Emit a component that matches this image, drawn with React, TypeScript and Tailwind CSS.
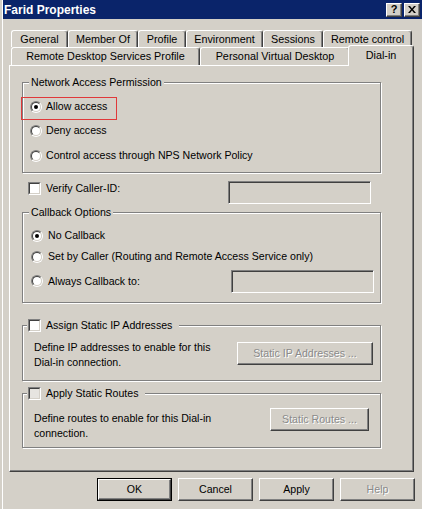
import type { ReactNode } from 'react'

const raised =
  'border border-t-white border-l-white border-r-[#404040] border-b-[#404040] shadow-[inset_-1px_-1px_0_#808080]'
const sunken =
  'border border-t-[#808080] border-l-[#808080] border-r-white border-b-white shadow-[inset_1px_1px_0_#404040]'
const disabledText = 'text-[#8a8a8a] [text-shadow:1px_1px_0_#fff]'

function Radio({ checked = false }: { checked?: boolean }) {
  return (
    <span className="flex h-[12px] w-[12px] shrink-0 items-center justify-center rounded-full border border-t-[#808080] border-l-[#808080] border-r-white border-b-white">
      <span className="flex h-[10px] w-[10px] items-center justify-center rounded-full border border-t-[#404040] border-l-[#404040] border-r-[#d4d0c8] border-b-[#d4d0c8] bg-white">
        {checked && <span className="h-[4px] w-[4px] rounded-full bg-black" />}
      </span>
    </span>
  )
}

function Checkbox({ disabled = false }: { disabled?: boolean }) {
  return (
    <span className="flex h-[13px] w-[13px] shrink-0 border border-t-[#808080] border-l-[#808080] border-r-white border-b-white">
      <span
        className={`h-full w-full border border-t-[#404040] border-l-[#404040] border-r-[#d4d0c8] border-b-[#d4d0c8] ${
          disabled ? 'bg-[#e6e4e0]' : 'bg-white'
        }`}
      />
    </span>
  )
}

function Tab({ label, className, selected = false }: { label: string; className: string; selected?: boolean }) {
  return (
    <div
      className={`flex shrink-0 items-center justify-center rounded-t-[3px] border-t border-l border-r border-t-white border-l-white border-r-[#404040] bg-[#d4d0c8] shadow-[inset_-1px_0_0_#808080] ${className} ${
        selected ? 'relative z-10 -mx-[2px] -mb-[1px]' : ''
      }`}
    >
      {label}
    </div>
  )
}

function DlgButton({ label, isDefault = false, disabled = false }: { label: string; isDefault?: boolean; disabled?: boolean }) {
  const inner = (
    <div className={`flex h-full w-full items-center justify-center ${raised} ${disabled ? disabledText : ''}`}>{label}</div>
  )
  if (isDefault) {
    return <div className="h-[23px] w-[75px] border border-black">{inner}</div>
  }
  return <div className="h-[23px] w-[75px]">{inner}</div>
}

function GroupBox({ className, children }: { className: string; children: ReactNode }) {
  return (
    <div
      className={`ml-[12px] flex w-[359px] flex-col border border-[#808080] shadow-[inset_1px_1px_0_#fff,1px_1px_0_#fff] ${className}`}
    >
      {children}
    </div>
  )
}

function Legend({ text }: { text: string }) {
  return <div className="-mt-[8px] ml-[6px] h-[14px] self-start bg-[#d4d0c8] px-[2px] leading-[14px]">{text}</div>
}

function CheckLegend({ text, disabled = false }: { text: string; disabled?: boolean }) {
  return (
    <div className="-mt-[7px] ml-[4px] flex h-[13px] items-center gap-[5px] self-start bg-[#d4d0c8] pl-[1px] pr-[7px] leading-[13px]">
      <Checkbox disabled={disabled} />
      <span>{text}</span>
    </div>
  )
}

export default function App() {
  return (
    <div className="flex h-[509px] w-[422px] flex-col overflow-hidden bg-[#d4d0c8] pl-[2px] font-['Liberation_Sans',Arial,sans-serif] text-[10.6px] text-black">
      <div className="flex flex-1 flex-col border-l border-white">
        {/* title bar */}
        <div className="flex h-[19px] shrink-0 items-center justify-between bg-[#0a246a] pl-[1px] pr-[2px]">
          <span className="text-[12px] font-bold text-white">Farid Properties</span>
          <div className="flex gap-[2px]">
            <div className={`flex h-[14px] w-[16px] items-center justify-center bg-[#d4d0c8] text-[11px] font-bold leading-none ${raised}`}>
              ?
            </div>
            <div className={`flex h-[14px] w-[16px] items-center justify-center bg-[#d4d0c8] ${raised}`}>
              <svg width="8" height="7" viewBox="0 0 8 7">
                <path d="M0 0h2l2 2.5L6 0h2L5 3.5 8 7H6L4 4.5 2 7H0l3-3.5z" fill="#000" />
              </svg>
            </div>
          </div>
        </div>

        <div className="flex flex-col pl-[6px] pt-[11px]">
          {/* tabs */}
          <div className="ml-[2px] flex w-[401px] text-[10.8px]">
            <Tab label="General" className="h-[17px] w-[57px]" />
            <Tab label="Member Of" className="h-[17px] w-[70px]" />
            <Tab label="Profile" className="h-[17px] w-[48px]" />
            <Tab label="Environment" className="h-[17px] w-[77px]" />
            <Tab label="Sessions" className="h-[17px] w-[60px]" />
            <Tab label="Remote control" className="h-[17px] w-[89px]" />
          </div>
          <div className="ml-[2px] flex h-[18px] w-[401px] items-end text-[10.8px]">
            <Tab label="Remote Desktop Services Profile" className="h-[18px] w-[189px]" />
            <Tab label="Personal Virtual Desktop" className="h-[18px] w-[150px]" />
            <Tab label="Dial-in" className="h-[21px] w-[66px] pb-[1px]" selected />
          </div>

          {/* panel */}
          <div className={`flex h-[407px] w-[405px] flex-col ${raised}`}>
            <GroupBox className="mt-[16px] h-[91px]">
              <Legend text="Network Access Permission" />
              <div className="relative mt-[10px] flex h-[16px] items-center gap-[4px] pl-[7px]">
                <Radio checked />
                <span>Allow access</span>
                <div className="absolute -left-[2px] -top-[2px] h-[23px] w-[96px] border border-[#e0393a]" />
              </div>
              <div className="mt-[8px] flex h-[16px] items-center gap-[4px] pl-[7px]">
                <Radio />
                <span>Deny access</span>
              </div>
              <div className="mt-[9px] flex h-[16px] items-center gap-[4px] pl-[7px]">
                <Radio />
                <span>Control access through NPS Network Policy</span>
              </div>
            </GroupBox>

            <div className="mt-[8px] flex h-[23px] items-start">
              <div className="ml-[18px] mt-[1px] flex h-[13px] w-[200px] items-center gap-[5px]">
                <Checkbox />
                <span>Verify Caller-ID:</span>
              </div>
              <div className={`h-[23px] w-[143px] bg-[#d4d0c8] ${sunken}`} />
            </div>

            <GroupBox className="mt-[8px] h-[91px]">
              <Legend text="Callback Options" />
              <div className="mt-[9px] flex h-[16px] items-center gap-[5px] pl-[8px]">
                <Radio checked />
                <span>No Callback</span>
              </div>
              <div className="mt-[5px] flex h-[16px] items-center gap-[5px] pl-[8px]">
                <Radio />
                <span>Set by Caller (Routing and Remote Access Service only)</span>
              </div>
              <div className="mt-[5px] flex h-[23px] items-center">
                <div className="flex w-[208px] items-center gap-[5px] pl-[8px]">
                  <Radio />
                  <span>Always Callback to:</span>
                </div>
                <div className={`h-[23px] w-[143px] bg-[#d4d0c8] ${sunken}`} />
              </div>
            </GroupBox>

            <GroupBox className="mt-[22px] h-[56px]">
              <CheckLegend text="Assign Static IP Addresses" />
              <div className="mt-[8px] flex items-start">
                <div className="ml-[11px] w-[203px] leading-[15px]">
                  Define IP addresses to enable for this
                  <br />
                  Dial-in connection.
                </div>
                <div className={`mt-[2px] flex h-[23px] w-[136px] items-center justify-center ${raised} ${disabledText}`}>
                  Static IP Addresses ...
                </div>
              </div>
            </GroupBox>

            <GroupBox className="mt-[12px] h-[55px]">
              <CheckLegend text="Apply Static Routes" disabled />
              <div className="mt-[8px] flex items-start">
                <div className="ml-[11px] w-[236px] pt-[3px] leading-[15px]">
                  Define routes to enable for this Dial-in
                  <br />
                  connection.
                </div>
                <div className={`flex h-[23px] w-[99px] items-center justify-center ${raised} ${disabledText}`}>
                  Static Routes ...
                </div>
              </div>
            </GroupBox>
          </div>
        </div>

        {/* dialog buttons */}
        <div className="mt-[6px] flex justify-end gap-[6px] pr-[7px]">
          <DlgButton label="OK" isDefault />
          <DlgButton label="Cancel" />
          <DlgButton label="Apply" />
          <DlgButton label="Help" disabled />
        </div>
      </div>
    </div>
  )
}
